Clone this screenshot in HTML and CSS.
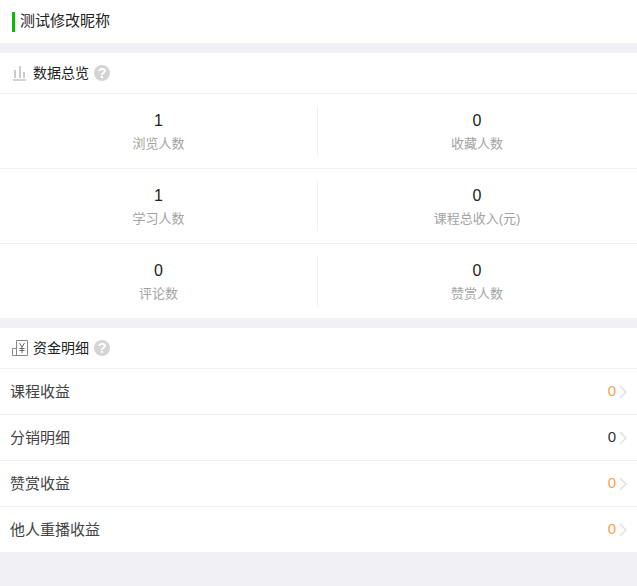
FILE: index.html
```html
<!DOCTYPE html>
<html lang="zh">
<head>
<meta charset="utf-8">
<title>数据</title>
<link rel="stylesheet" href="styles.css">
</head>
<body>
<header class="title-bar"><h1 class="title">测试修改昵称</h1></header>
<section class="card">
  <div class="card-head">
    <svg class="head-icon" width="16" height="16" viewBox="0 0 16 16"><path d="M3 5v8M8 1v12M12 7v6M1 15h13" fill="none" stroke="#aaa" stroke-width="1.200"/></svg>
    <h2 class="head-title">数据总览</h2><span class="help">?</span>
  </div>
  <div class="stat-row">
    <div class="stat"><div class="stat-num">1</div><div class="stat-label">浏览人数</div></div>
    <div class="stat"><div class="stat-num">0</div><div class="stat-label">收藏人数</div></div>
  </div>
  <div class="stat-row">
    <div class="stat"><div class="stat-num">1</div><div class="stat-label">学习人数</div></div>
    <div class="stat"><div class="stat-num">0</div><div class="stat-label">课程总收入(元)</div></div>
  </div>
  <div class="stat-row">
    <div class="stat"><div class="stat-num">0</div><div class="stat-label">评论数</div></div>
    <div class="stat"><div class="stat-num">0</div><div class="stat-label">赞赏人数</div></div>
  </div>
</section>
<section class="card">
  <div class="card-head">
    <svg class="head-icon" width="16" height="16" viewBox="0 0 16 16"><path d="M4.500 8.500H.5v7h15V.5h-11v15" fill="none" stroke="#888" stroke-width="1"/><path d="M7.500 3l2.500 4 2.500-4M10 7v6M7.500 8.500h5M7.500 10.500h5" fill="none" stroke="#666" stroke-width="1"/></svg>
    <h2 class="head-title">资金明细</h2><span class="help">?</span>
  </div>
  <div class="list-row"><span class="list-name">课程收益</span><span class="list-val orange">0</span><svg class="chev" width="8" height="14" viewBox="0 0 8 14"><path d="M1 1l6 6-6 6" fill="none" stroke="#e0e0e0" stroke-width="1.500"/></svg></div>
  <div class="list-row"><span class="list-name">分销明细</span><span class="list-val">0</span><svg class="chev" width="8" height="14" viewBox="0 0 8 14"><path d="M1 1l6 6-6 6" fill="none" stroke="#e0e0e0" stroke-width="1.500"/></svg></div>
  <div class="list-row"><span class="list-name">赞赏收益</span><span class="list-val orange">0</span><svg class="chev" width="8" height="14" viewBox="0 0 8 14"><path d="M1 1l6 6-6 6" fill="none" stroke="#e0e0e0" stroke-width="1.500"/></svg></div>
  <div class="list-row"><span class="list-name">他人重播收益</span><span class="list-val orange">0</span><svg class="chev" width="8" height="14" viewBox="0 0 8 14"><path d="M1 1l6 6-6 6" fill="none" stroke="#e0e0e0" stroke-width="1.500"/></svg></div>
</section>
</body>
</html>
```
FILE: styles.css
```css
html, body { margin: 0; padding: 0; }
body {
  background: #efeff4;
  height: 586px;
  overflow: hidden;
  font-family: "Liberation Sans", "Noto Sans CJK SC", sans-serif;
  color: #333;
}
.title-bar {
  background: #fff;
  height: 43px;
  display: flex;
  align-items: center;
  padding-left: 12px;
}
.title {
  margin: 0;
  border-left: 3px solid #09bb07;
  padding-left: 5px;
  font-size: 15px;
  font-weight: 400;
  line-height: 18px;
  padding-bottom: 2px;
  color: #222;
}
.card { background: #fff; margin-top: 10px; }
.card-head {
  height: 40px;
  display: flex;
  align-items: center;
  padding-left: 12px;
  border-bottom: 1px solid #f0f0f0;
}
.head-icon { margin-right: 5px; flex: none; }
.head-title { margin: 0 0 2px; font-size: 14px; font-weight: 400; color: #222; }
.help {
  width: 16px;
  height: 16px;
  margin-left: 5px;
  border-radius: 50%;
  background: #d4d4d4;
  color: #fff;
  font-size: 15px;
  font-weight: 700;
  line-height: 16px;
  text-align: center;
}
.stat-row {
  display: grid;
  grid-template-columns: 1fr 1fr;
  height: 74px;
  padding-right: 1px;
  align-items: center;
  border-bottom: 1px solid #f0f0f0;
}
.stat-row:last-child { border-bottom: 0; }
.stat { height: 50px; text-align: center; }
.stat:first-child { border-right: 1px solid #f0f0f0; }
.stat-num { font-size: 16px; line-height: 26px; padding-top: 2px; color: #222; }
.stat-label { font-size: 13px; line-height: 20px; color: #a3a3a3; }
.list-row {
  height: 45px;
  display: flex;
  align-items: center;
  padding: 0 10px 0 10px;
  border-top: 1px solid #f0f0f0;
}
.card-head + .list-row { border-top: 0; }
.list-name { flex: 1; font-size: 15px; line-height: 21px; color: #444; }
.list-val { font-size: 15px; line-height: 20px; padding-bottom: 2px; color: #333; margin-right: 3px; }
.orange { color: #f7a14c; }
.chev { flex: none; }
```
